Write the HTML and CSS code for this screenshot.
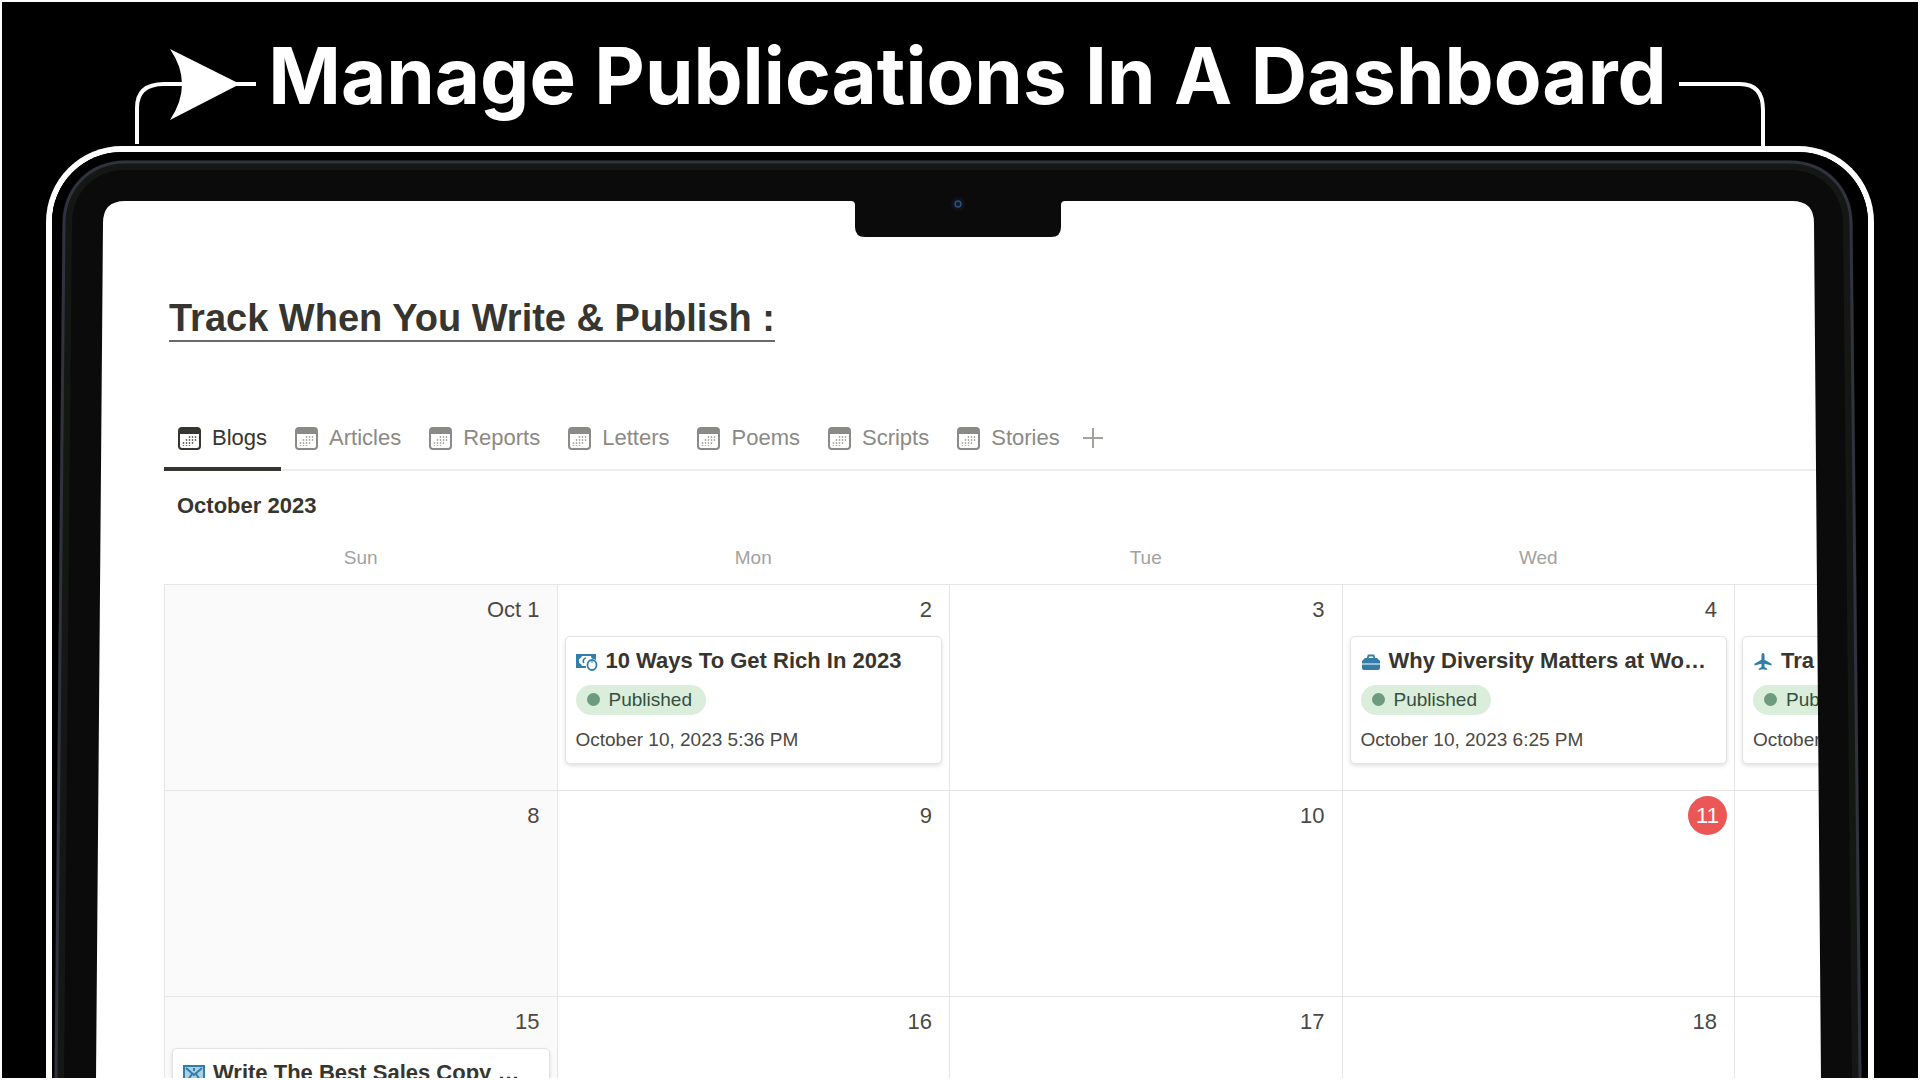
FILE: index.html
```html
<!DOCTYPE html>
<html lang="en">
<head>
    <meta charset="UTF-8">
    <meta name="viewport" content="width=device-width, initial-scale=1.0">
    <title>Manage Publications In A Dashboard</title>
    <link rel="stylesheet" href="styles.css">
</head>
<body>

<!-- shared icons -->
<svg class="sprite" aria-hidden="true">
    <symbol id="calendar" viewBox="0 0 23 23">
        <path fill="currentColor" fill-rule="evenodd" d="M4 0h15a4 4 0 0 1 4 4v15a4 4 0 0 1-4 4H4a4 4 0 0 1-4-4V4a4 4 0 0 1 4-4zM2 7v12a2 2 0 0 0 2 2h15a2 2 0 0 0 2-2V7z"/>
        <path stroke="currentColor" stroke-width="1.4" stroke-dasharray="2 1" opacity=".7" d="M5.5 15v4M8.5 12v7M11.5 9v10M14.5 9v9M17.5 9v6"/>
    </symbol>
    <symbol id="money" viewBox="0 0 22 18">
        <path fill="currentColor" fill-rule="evenodd" d="M0 1h20v6a6 6 0 0 0-3-1 3 3 0 0 1-2-3H6a4 4 0 0 1-3 3v4a4 4 0 0 1 3 3h4v2H0z"/>
        <path fill="none" stroke="currentColor" stroke-width="1.6" d="M10 5a3 3 0 0 0-2 5"/>
        <ellipse cx="16" cy="12" rx="4.5" ry="5" fill="#fff" stroke="currentColor" stroke-width="1.8"/>
        <path stroke="currentColor" stroke-width="1" d="M16 8v2"/>
    </symbol>
    <symbol id="briefcase" viewBox="0 0 18 18">
        <path fill="none" stroke="currentColor" stroke-width="1.8" d="M5.500 5.500l1-3h5l1 3"/>
        <path fill="currentColor" d="M3 5h12l3 3v2.500H0V8zM0 11.500h18V15a2 2 0 0 1-2 2H2a2 2 0 0 1-2-2z"/>
    </symbol>
    <symbol id="plane" viewBox="0 0 20 20">
        <path fill="currentColor" d="M10 0c1.200 0 1.700 1.500 1.700 3v4.500l7.800 4.500v2l-7.800-2v3.500l3 2V19L10 18l-4.700 1v-1.500l3-2V12L.5 14v-2l7.800-4.500V3c0-1.500.5-3 1.700-3z"/>
    </symbol>
    <symbol id="envelope" viewBox="0 0 22 18">
        <rect x="1" y="1" width="20" height="16" fill="#a9d0e4" stroke="currentColor" stroke-width="2"/>
        <path fill="none" stroke="currentColor" stroke-width="2" d="M3 3l8 7 8-7M5 15l4-6M17 15l-4-6M11 3v3"/>
    </symbol>
</svg>

<header class="banner">
    <svg class="connector-left" viewBox="0 0 122 104" aria-hidden="true">
        <path class="wire" d="M3 102V66Q3 42 30 42H122"/>
        <path class="arrow" d="M36 7L106 42 36 78Q60 42 36 7z"/>
    </svg>
    <h1>Manage Publications In A Dashboard</h1>
    <svg class="connector-right" viewBox="0 0 88 104" aria-hidden="true">
        <path class="wire" d="M0 42H61Q84 42 84 68V104"/>
    </svg>
</header>

<main class="frame">
    <div class="screen">
        <h2>Track When You Write &amp; Publish :</h2>

        <nav class="tabs">
            <a href="#" class="tab active"><svg><use href="#calendar"/></svg>Blogs</a>
            <a href="#" class="tab"><svg><use href="#calendar"/></svg>Articles</a>
            <a href="#" class="tab"><svg><use href="#calendar"/></svg>Reports</a>
            <a href="#" class="tab"><svg><use href="#calendar"/></svg>Letters</a>
            <a href="#" class="tab"><svg><use href="#calendar"/></svg>Poems</a>
            <a href="#" class="tab"><svg><use href="#calendar"/></svg>Scripts</a>
            <a href="#" class="tab"><svg><use href="#calendar"/></svg>Stories</a>
            <button class="add" aria-label="Add view"><svg viewBox="0 0 20 20"><path d="M10 0v20M0 10h20"/></svg></button>
        </nav>

        <h3>October 2023</h3>

        <table class="calendar">
            <thead>
                <tr><th>Sun</th><th>Mon</th><th>Tue</th><th>Wed</th><th></th></tr>
            </thead>
            <tbody>
                <tr>
                    <td class="weekend"><div class="day">Oct 1</div></td>
                    <td>
                        <div class="day">2</div>
                        <article class="card">
                            <h4><svg class="wide"><use href="#money"/></svg><span>10 Ways To Get Rich In 2023</span></h4>
                            <p class="status">Published</p>
                            <p class="date">October 10, 2023 5:36 PM</p>
                        </article>
                    </td>
                    <td><div class="day">3</div></td>
                    <td>
                        <div class="day">4</div>
                        <article class="card">
                            <h4><svg><use href="#briefcase"/></svg><span>Why Diversity Matters at Wo…</span></h4>
                            <p class="status">Published</p>
                            <p class="date">October 10, 2023 6:25 PM</p>
                        </article>
                    </td>
                    <td>
                        <div class="day"></div>
                        <article class="card">
                            <h4><svg><use href="#plane"/></svg><span>Tra</span></h4>
                            <p class="status">Published</p>
                            <p class="date">October</p>
                        </article>
                    </td>
                </tr>
                <tr>
                    <td class="weekend"><div class="day">8</div></td>
                    <td><div class="day">9</div></td>
                    <td><div class="day">10</div></td>
                    <td><div class="day today"><span>11</span></div></td>
                    <td></td>
                </tr>
                <tr>
                    <td class="weekend">
                        <div class="day">15</div>
                        <article class="card">
                            <h4><svg class="wide"><use href="#envelope"/></svg><span>Write The Best Sales Copy …</span></h4>
                        </article>
                    </td>
                    <td><div class="day">16</div></td>
                    <td><div class="day">17</div></td>
                    <td><div class="day">18</div></td>
                    <td></td>
                </tr>
            </tbody>
        </table>
    </div>

    <!-- laptop bezel with the notch, lies over the screen -->
    <svg class="bezel" viewBox="0 0 1816 928" preserveAspectRatio="none" aria-hidden="true">
        <path fill="#0b0b0b" fill-rule="evenodd" d="M0 928V70Q0 0 70 0H1746Q1816 0 1816 70V928H1769L1762 71Q1762 49 1740 49H1013Q1009 49 1009 53V75Q1009 85 999 85H813Q803 85 803 75V53Q803 49 799 49H73Q51 49 51 71L44 928z"/>
        <path fill="#000" fill-rule="evenodd" d="M0 928V70Q0 0 70 0H1746Q1816 0 1816 70V928H1810L1801 72C1801 36 1776 8 1737 8H74C35 8 10 36 10 72L2 928z"/>
        <path fill="none" stroke="#141714" stroke-width="8" d="M8 928L16 72C16 40 38 14 74 14H1737C1773 14 1795 40 1795 72L1804 928"/>
        <path fill="none" stroke="#30323f" stroke-width="3" d="M4 928L12 72C12 38 36 10 74 10H1737C1775 10 1799 38 1799 72L1808 928"/>
        <circle cx="906" cy="52" r="7" fill="#101218"/>
        <circle cx="906" cy="52" r="3" fill="#0d1b33" stroke="#2d4f7c" stroke-width="1.500"/>
    </svg>
</main>

</body>
</html>
```
FILE: styles.css
```css
* {
    box-sizing: border-box;
}
body {
    margin: 0;
    height: 100vh;
    display: flex;
    flex-direction: column;
    overflow: hidden;
    background-color: #000;
    border: 2px solid #fff;
    font-family: "Liberation Sans", Arial, sans-serif;
    color: #37352f;
}
h1, h2, h3, h4, p {
    margin: 0;
}
.sprite {
    display: none;
}

/* title with the lines that tie it to the laptop */
.banner {
    flex: none;
    height: 144px;
    display: flex;
    align-items: flex-end;
    justify-content: space-between;
    padding: 0 151px 0 132px;
}
.banner svg {
    flex: none;
    height: 104px;
}
.connector-left {
    width: 122px;
}
.connector-right {
    width: 88px;
}
.wire {
    fill: none;
    stroke: #fff;
    stroke-width: 4;
}
.arrow {
    fill: #fff;
}
h1 {
    color: #fff;
    font-family: Inter, sans-serif;
    font-size: 78px;
    font-weight: 700;
    line-height: 140px;
    white-space: nowrap;
}

/* laptop */
.frame {
    flex: 1;
    min-height: 0;
    position: relative;
    margin: 0 44px -2px;
    border: 6px solid #fff;
    border-bottom: 0;
    border-radius: 76px 76px 0 0;
    overflow: hidden;
}
.bezel {
    position: absolute;
    top: 0;
    left: 0;
    width: 100%;
    height: 100%;
    pointer-events: none;
}
.screen {
    height: 100%;
    margin: 0 40px;
    padding: 144px 0 0 72px;
    background-color: #fff;
    overflow: hidden;
}
h2 {
    width: fit-content;
    margin-left: 5px;
    font-size: 38px;
    line-height: 44px;
    border-bottom: 2px solid #6b6a66;
}

/* tabs */
.tabs {
    display: flex;
    margin-top: 65px;
    box-shadow: inset 0 -2px #ededec;
}
.tab {
    display: flex;
    align-items: center;
    gap: 11px;
    height: 64px;
    padding: 2px 14px 0;
    border-bottom: 4px solid transparent;
    color: #8b8a87;
    font-size: 22px;
    text-decoration: none;
}
.tab svg {
    width: 23px;
    height: 23px;
}
.tab.active {
    color: #37352f;
    border-color: #37352f;
}
.add {
    padding: 0 9px 2px;
    border: none;
    background: none;
    cursor: pointer;
}
.add svg {
    display: block;
    width: 20px;
    height: 20px;
    stroke: #a3a29f;
    stroke-width: 2;
}
h3 {
    margin: 21px 0 0 13px;
    font-size: 22px;
    line-height: 28px;
}

/* calendar */
.calendar {
    width: 118%;
    table-layout: fixed;
    border-collapse: collapse;
}
th {
    height: 64px;
    padding: 12px 0 0;
    color: #a3a29f;
    font-size: 19px;
    font-weight: 400;
}
td {
    height: 206px;
    padding: 5px 7px 0;
    border: 1px solid #e6e6e5;
    vertical-align: top;
}
.weekend {
    background-color: #fafafa;
}
.day {
    height: 39px;
    padding-right: 10px;
    color: #4a4945;
    font-size: 22px;
    line-height: 39px;
    text-align: right;
}
.today {
    display: flex;
    justify-content: flex-end;
    padding-right: 0;
}
.today span {
    width: 39px;
    border-radius: 50%;
    background-color: #eb5757;
    color: #fff;
    text-align: center;
}
.card {
    height: 128px;
    margin-top: 7px;
    padding: 10px 10px 0;
    border: 1px solid #e3e3e2;
    border-radius: 5px;
    background-color: #fff;
    box-shadow: 0 2px 4px rgba(0, 0, 0, 0.12);
    white-space: nowrap;
}
.card h4 {
    display: flex;
    align-items: center;
    gap: 8px;
    font-size: 22px;
    line-height: 28px;
}
.card h4 svg {
    width: 20px;
    height: 18px;
    margin-top: 3px;
    color: #337ea9;
}
.card h4 .wide {
    width: 22px;
}
.status {
    display: flex;
    align-items: center;
    gap: 9px;
    width: fit-content;
    height: 30px;
    margin-top: 10px;
    padding: 0 14px 0 11px;
    border-radius: 15px;
    background-color: #dbeddb;
    color: #35503f;
    font-size: 19px;
}
.status::before {
    content: "";
    width: 13px;
    height: 13px;
    border-radius: 50%;
    background-color: #6c9b7d;
}
.date {
    margin-top: 13px;
    color: #4a4945;
    font-size: 19px;
    line-height: 24px;
}
```
